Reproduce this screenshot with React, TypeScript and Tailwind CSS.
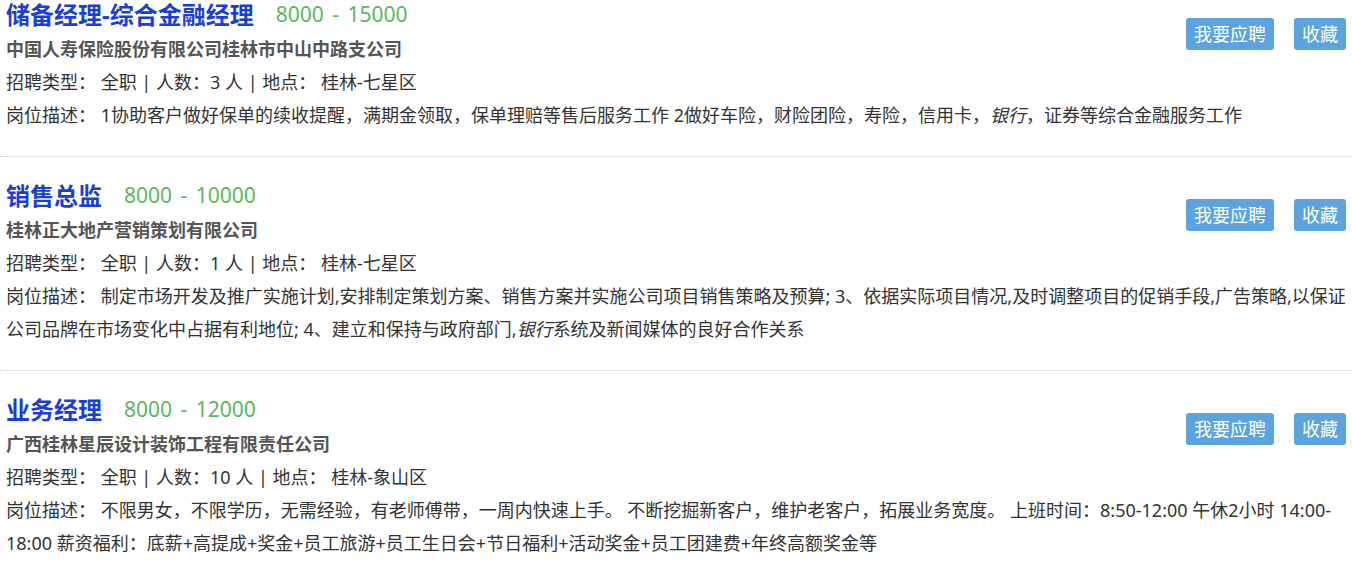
import React from "react";

type Job = {
	title: string;
	salary: string;
	company: string;
	count: number;
	place: string;
	desc: React.ReactNode;
};

const jobs: Job[] = [
	{
		title: "储备经理-综合金融经理",
		salary: "8000 - 15000",
		company: "中国人寿保险股份有限公司桂林市中山中路支公司",
		count: 3,
		place: "桂林-七星区",
		desc: (
			<>
				1协助客户做好保单的续收提醒，满期金领取，保单理赔等售后服务工作 2做好车险，财险团险，寿险，信用卡，<em>银行</em>，证券等综合金融服务工作
			</>
		),
	},
	{
		title: "销售总监",
		salary: "8000 - 10000",
		company: "桂林正大地产营销策划有限公司",
		count: 1,
		place: "桂林-七星区",
		desc: (
			<>
				制定市场开发及推广实施计划,安排制定策划方案、销售方案并实施公司项目销售策略及预算; 3、依据实际项目情况,及时调整项目的促销手段,广告策略,以保证公司品牌在市场变化中占据有利地位; 4、建立和保持与政府部门,<em>银行</em>系统及新闻媒体的良好合作关系
			</>
		),
	},
	{
		title: "业务经理",
		salary: "8000 - 12000",
		company: "广西桂林星辰设计装饰工程有限责任公司",
		count: 10,
		place: "桂林-象山区",
		desc: (
			<>
				不限男女，不限学历，无需经验，有老师傅带，一周内快速上手。 不断挖掘新客户，维护老客户，拓展业务宽度。 上班时间：8:50-12:00 午休2小时 14:00-<wbr />18:00 薪资福利：底薪+高提成+奖金+员工旅游+员工生日会+节日福利+活动奖金+员工团建费+年终高额奖金等
			</>
		),
	},
];

export default function App() {
	return (
		<div
			className="bg-white text-[18px] text-[#333]"
			style={{ fontFamily: '"Noto Sans", "Noto Sans CJK SC", sans-serif' }}
		>
			{jobs.map((job, i) => (
				<div
					key={job.title}
					className={
						i === 0
							? "px-[6px] pb-6 border-b border-dotted border-[#ccc]"
							: "px-[6px] py-6 border-b border-dotted border-[#ccc]"
					}
				>
					{/* Actions */}
					<div className="float-right mt-[18px] flex gap-5">
						<button className="h-8 px-2 rounded-[3px] bg-[#5ba4e0] text-white text-[18px] leading-8">
							我要应聘
						</button>
						<button className="h-8 px-2 rounded-[3px] bg-[#5ba4e0] text-white text-[18px] leading-8">
							收藏
						</button>
					</div>

					<div className="flex items-center h-[30px] mb-[3px] gap-[22px]">
						<span className="text-[24px] font-bold text-[#1a3ed8]">{job.title}</span>
						<span className="text-[21px] text-[#5cb85c] [word-spacing:3px]">{job.salary}</span>
					</div>
					<div className="leading-[33px] font-bold text-[#555]">{job.company}</div>
					<div className="leading-[33px]">
						招聘类型： 全职 | 人数：{job.count} 人 | 地点： {job.place}
					</div>
					<div className="leading-[33px]">岗位描述： {job.desc}</div>
				</div>
			))}
		</div>
	);
}
